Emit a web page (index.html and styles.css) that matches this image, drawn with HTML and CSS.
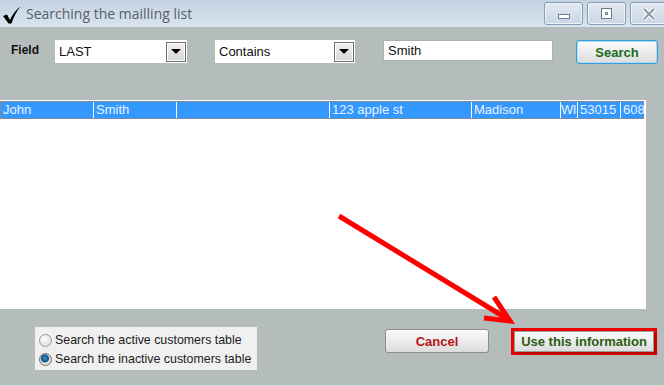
FILE: index.html
```html
<!DOCTYPE html>
<html lang="en">
<head>
    <meta charset="UTF-8">
    <title>Searching the mailling list</title>
    <link rel="stylesheet" href="styles.css">
</head>
<body>
    <div class="window">
        <div class="titlebar">
            <svg class="check" width="18" height="18" viewBox="0 0 18 18">
                <path d="M0 10 L4 8.5 L7 14 Q11 5 17.5 0.5 Q12 7 8.5 17.5 L5.5 17.5 Z" fill="#000"/>
            </svg>
            <span class="title">Searching the mailling list</span>
            <div class="winbtns">
                <div class="winbtn"><span class="min"></span></div>
                <div class="winbtn"><span class="max"></span></div>
                <div class="winbtn close">
                    <svg width="14" height="12" viewBox="0 0 14 12">
                        <path d="M2 1 L12 11 M12 1 L2 11" stroke="#fff" stroke-width="4"/>
                        <path d="M2 1 L12 11 M12 1 L2 11" stroke="#8c99a8" stroke-width="2"/>
                    </svg>
                </div>
            </div>
        </div>

        <div class="toolbar">
            <label class="field-label">Field</label>
            <div class="combo combo-field">
                <span>LAST</span>
                <div class="drop"><span class="tri"></span></div>
            </div>
            <div class="combo combo-op">
                <span>Contains</span>
                <div class="drop"><span class="tri"></span></div>
            </div>
            <div class="textbox">Smith</div>
            <button class="btn btn-search">Search</button>
        </div>

        <div class="results">
            <div class="row selected">
                <div class="cell" style="width:93px">John</div>
                <div class="cell" style="width:83px">Smith</div>
                <div class="cell" style="width:153px"></div>
                <div class="cell" style="width:142px">123 apple st</div>
                <div class="cell" style="width:89px">Madison</div>
                <div class="cell tight" style="width:17px">WI</div>
                <div class="cell" style="width:43px">53015</div>
                <div class="cell last" style="width:23px">608</div>
            </div>
        </div>

        <div class="footer">
            <div class="radios">
                <div class="radio-row"><span class="radio"></span>Search the active customers table</div>
                <div class="radio-row"><span class="radio checked"></span>Search the inactive customers table</div>
            </div>
            <button class="btn btn-cancel">Cancel</button>
            <div class="highlight">
                <button class="btn btn-use">Use this information</button>
            </div>
        </div>
    </div>

    <svg class="arrow" width="664" height="386" viewBox="0 0 664 386">
        <line x1="339" y1="216" x2="506" y2="318" stroke="#f00" stroke-width="5"/>
        <polyline points="494,297 510,321 484,318" fill="none" stroke="#f00" stroke-width="5" stroke-linejoin="miter"/>
    </svg>
</body>
</html>
```

FILE: styles.css
```css
body {
    margin: 0;
    font-family: "Liberation Sans", Arial, sans-serif;
    font-size: 12px;
    background: #b4bcbc;
}
.window {
    width: 664px;
    height: 386px;
    display: flex;
    flex-direction: column;
    background: #b4bcbc;
    border-bottom: 1px solid #d6dede;
    box-sizing: border-box;
}
.titlebar {
    height: 27px;
    display: flex;
    align-items: center;
    background: linear-gradient(#c4d3e3, #d8e4ef);
}
.check {
    margin-left: 3px;
    margin-top: 2px;
}
.title {
    margin-left: 5px;
    font-family: "Open Sans", "Noto Sans", sans-serif;
    font-size: 14px;
    color: #5a5f66;
}
.winbtns {
    margin-left: auto;
    display: flex;
    gap: 4px;
    align-self: flex-start;
    margin-top: 2px;
    margin-right: -4px;
}
.winbtn {
    width: 37px;
    height: 21px;
    border: 1px solid #8b9cb1;
    border-radius: 3px;
    background: linear-gradient(#e2eaf3, #c9d6e4);
    display: flex;
    align-items: center;
    justify-content: center;
    box-shadow: inset 0 0 0 1px #eef3f8;
}
.winbtn .min {
    width: 10px;
    height: 3px;
    margin-top: 6px;
    border: 1px solid #6d7a8a;
    background: #fff;
}
.winbtn .max {
    width: 3px;
    height: 3px;
    border: 3px solid #fff;
    background: #fff;
    box-shadow: 0 0 0 1px #6d7a8a, inset 0 0 0 1px #6d7a8a;
}
.winbtn.close {
    width: 36px;
}
.toolbar {
    display: flex;
    align-items: flex-start;
    margin-top: 13px;
    height: 24px;
}
.field-label {
    width: 44px;
    padding-left: 11px;
    padding-top: 3px;
    font-weight: bold;
    font-size: 12px;
    color: #111;
}
.combo {
    height: 23px;
    background: #fff;
    display: flex;
    align-items: center;
    box-sizing: border-box;
    padding-left: 4px;
    font-size: 13px;
    color: #111;
}
.combo span {
    flex: 1;
}
.combo-field {
    width: 132px;
}
.combo-op {
    width: 140px;
    margin-left: 28px;
}
.drop {
    width: 20px;
    height: 20px;
    margin-right: 1px;
    border: 1px solid #6e6e6e;
    box-sizing: border-box;
    background: linear-gradient(#f4f4f4, #d4d4d4);
    display: flex;
    align-items: center;
    justify-content: center;
    box-shadow: inset 0 0 0 1px #fff;
}
.tri {
    flex: none !important;
    width: 0;
    height: 0;
    border-left: 5px solid transparent;
    border-right: 5px solid transparent;
    border-top: 5px solid #000;
}
.textbox {
    width: 170px;
    height: 21px;
    margin-left: 28px;
    background: #fff;
    border: 1px solid #a9b0b0;
    box-sizing: border-box;
    padding-left: 4px;
    line-height: 19px;
    font-size: 13px;
    color: #111;
}
.btn {
    font-family: "Liberation Sans", Arial, sans-serif;
    font-weight: bold;
    font-size: 13px;
    border: 1px solid #8d8d8d;
    border-radius: 3px;
    background: linear-gradient(#fbfbfb, #dcdcdc);
    cursor: pointer;
    padding: 0;
}
.btn-search {
    width: 82px;
    height: 24px;
    margin-left: 23px;
    border-color: #3b9bd8;
    box-shadow: inset 0 0 0 1px #a9dcf7;
    color: #1b6b1b;
}
.results {
    margin-top: 36px;
    width: 646px;
    height: 209px;
    background: #fff;
    padding-top: 1px;
    box-sizing: border-box;
}
.row {
    display: flex;
    height: 18px;
    width: 644px;
    box-sizing: border-box;
    border: 1px dotted #c47a3a;
}
.row.selected {
    background: #3399ff;
}
.cell {
    box-sizing: border-box;
    flex: none;
    border-right: 1px solid #fff;
    padding-left: 2px;
    line-height: 16px;
    color: #e9f2ff;
    font-size: 13px;
    white-space: nowrap;
    overflow: hidden;
}
.cell.tight {
    padding-left: 0;
    letter-spacing: -0.5px;
}
.cell.last {
    border-right: none;
}
.footer {
    display: flex;
    align-items: flex-start;
    padding-top: 18px;
}
.radios {
    margin-left: 35px;
    width: 222px;
    height: 43px;
    background: #f0f0f0;
    box-sizing: border-box;
    padding: 6px 0 0 4px;
    display: flex;
    flex-direction: column;
    gap: 5px;
    color: #1c1c1c;
    font-size: 12.4px;
}
.radio-row {
    display: flex;
    align-items: center;
    height: 14px;
}
.radio {
    width: 11px;
    height: 11px;
    border-radius: 50%;
    border: 1px solid #999;
    background: radial-gradient(circle at 40% 35%, #fdfdfd, #d6d6d6);
    margin-right: 3px;
}
.radio.checked {
    background: radial-gradient(circle at 45% 40%, #3f9ad6 0, #0e4f80 3.5px, #d8d8d8 4.5px, #e6e6e6 6px);
    border-color: #6b6b6b;
}
.btn-cancel {
    width: 104px;
    height: 24px;
    margin-left: 128px;
    margin-top: 2px;
    color: #b5141c;
}
.highlight {
    margin-left: 22px;
    margin-top: 1px;
    width: 146px;
    height: 27px;
    border: 3px solid #ee0000;
    box-sizing: border-box;
    display: flex;
}
.btn-use {
    flex: 1;
    border: 1px solid #9a9a9a;
    border-radius: 0;
    color: #2b5c12;
    box-shadow: 2px 2px 3px rgba(0, 0, 0, 0.25);
}
.arrow {
    position: absolute;
    left: 0;
    top: 0;
    pointer-events: none;
}
```
